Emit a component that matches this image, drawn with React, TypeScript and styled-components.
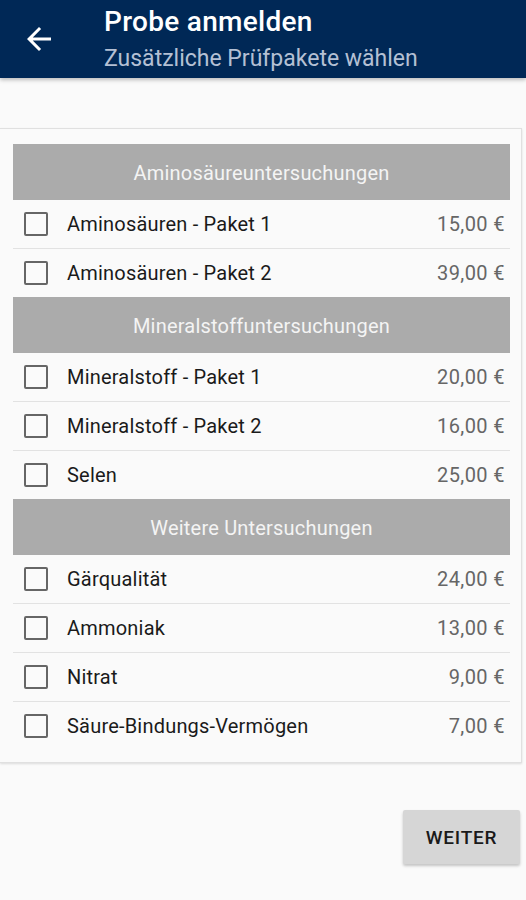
import styled, { createGlobalStyle } from "styled-components";

const GlobalStyle = createGlobalStyle`
  html, body {
    margin: 0;
    padding: 0;
    background: #fafafa;
    font-family: Roboto, "Noto Sans", Arial, sans-serif;
  }
`;

const Screen = styled.div`
  width: 526px;
  height: 900px;
  background: #fafafa;
  display: flex;
  flex-direction: column;
  overflow: hidden;
`;

const AppBar = styled.header`
  height: 78px;
  background: #002856;
  display: flex;
  align-items: center;
  box-shadow: 0 2px 4px rgba(0, 0, 0, 0.25);
  position: relative;
  z-index: 1;
`;

const BackButton = styled.div`
  width: 36px;
  height: 36px;
  margin-left: 21px;
  margin-right: 47px;
  display: flex;
  align-items: center;
  justify-content: center;
`;

const Titles = styled.div`
  display: flex;
  flex-direction: column;
  margin-top: 2px;
`;

const Title = styled.div`
  color: #ffffff;
  font-size: 28px;
  font-weight: 500;
  letter-spacing: 0.3px;
  line-height: 34px;
`;

const Subtitle = styled.div`
  color: #b4c0d4;
  font-size: 23px;
  line-height: 32px;
  margin-top: 4px;
`;

const Content = styled.main`
  padding-top: 50px;
  flex: 1;
  display: flex;
  flex-direction: column;
`;

const Card = styled.div`
  width: 522px;
  background: #fafafa;
  border: 1px solid #e0e0e0;
  border-left: none;
  box-shadow: 0 1px 2px rgba(0, 0, 0, 0.12);
  padding: 15px 11px 12px 13px;
  box-sizing: border-box;
`;

const SectionHeader = styled.div`
  height: 56px;
  background: #ababab;
  color: #f4f4f4;
  font-size: 20px;
  letter-spacing: 0.2px;
  display: flex;
  align-items: center;
  justify-content: center;
  padding-top: 2px;
  box-sizing: border-box;
`;

const Row = styled.div`
  height: 48px;
  display: flex;
  align-items: center;
  & + & {
    border-top: 1px solid #e2e2e2;
  }
`;

const Checkbox = styled.div`
  width: 20px;
  height: 20px;
  border: 2px solid #666;
  border-radius: 2px;
  margin-left: 11px;
  margin-right: 19px;
`;

const Label = styled.div`
  flex: 1;
  color: #1a1a1a;
  font-size: 20px;
  letter-spacing: 0.2px;
`;

const Price = styled.div`
  color: #666;
  font-size: 20px;
  letter-spacing: 0.4px;
  margin-right: 5px;
`;

const Footer = styled.div`
  display: flex;
  justify-content: flex-end;
  padding: 47px 6px 0 0;
`;

const Button = styled.button`
  width: 117px;
  height: 54px;
  background: #d6d6d6;
  border: none;
  border-radius: 2px;
  box-shadow: 0 2px 3px rgba(0, 0, 0, 0.22);
  font-family: Roboto, Arial, sans-serif;
  font-size: 19px;
  font-weight: 500;
  color: #1a1a1a;
  letter-spacing: 0.8px;
  padding: 0;
`;

const sections = [
  {
    title: "Aminosäureuntersuchungen",
    items: [
      ["Aminosäuren - Paket 1", "15,00 €"],
      ["Aminosäuren - Paket 2", "39,00 €"],
    ],
  },
  {
    title: "Mineralstoffuntersuchungen",
    items: [
      ["Mineralstoff - Paket 1", "20,00 €"],
      ["Mineralstoff - Paket 2", "16,00 €"],
      ["Selen", "25,00 €"],
    ],
  },
  {
    title: "Weitere Untersuchungen",
    items: [
      ["Gärqualität", "24,00 €"],
      ["Ammoniak", "13,00 €"],
      ["Nitrat", "9,00 €"],
      ["Säure-Bindungs-Vermögen", "7,00 €"],
    ],
  },
];

const App = () => {
  return (
    <Screen>
      <GlobalStyle />
      <AppBar>
        <BackButton>
          <svg width="36" height="36" viewBox="0 0 24 24">
            <path
              fill="#fff"
              d="M20 11H7.83l5.59-5.59L12 4l-8 8 8 8 1.41-1.41L7.83 13H20v-2z"
            />
          </svg>
        </BackButton>
        <Titles>
          <Title>Probe anmelden</Title>
          <Subtitle>Zusätzliche Prüfpakete wählen</Subtitle>
        </Titles>
      </AppBar>
      <Content>
        <Card>
          {sections.map((section) => (
            <div key={section.title}>
              <SectionHeader>{section.title}</SectionHeader>
              {section.items.map(([name, price]) => (
                <Row key={name}>
                  <Checkbox />
                  <Label>{name}</Label>
                  <Price>{price}</Price>
                </Row>
              ))}
            </div>
          ))}
        </Card>
        <Footer>
          <Button>WEITER</Button>
        </Footer>
      </Content>
    </Screen>
  );
};

export default App;
